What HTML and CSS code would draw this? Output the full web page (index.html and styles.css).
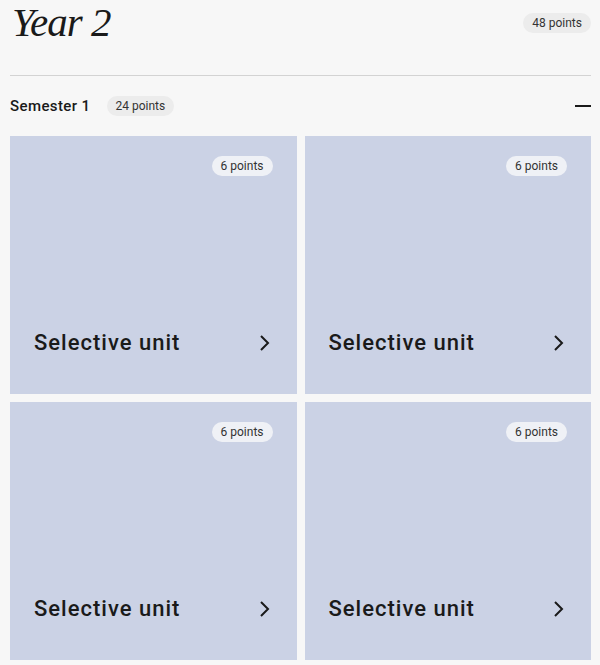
FILE: index.html
```html
<!DOCTYPE html>
<html lang="en">
<head>
  <meta charset="UTF-8" />
  <meta name="viewport" content="width=device-width, initial-scale=1.0"/>
  <title>Year 2</title>
  <link rel="stylesheet" href="styles.css">
</head>
<body>
  <section class="year">
    <header class="year-head">
      <h1>Year 2</h1>
      <span class="pill">48 points</span>
    </header>

    <div class="semester">
      <div class="semester-head">
        <h2>Semester 1</h2>
        <span class="pill">24 points</span>
        <span class="toggle"></span>
      </div>

      <div class="units">
        <a class="unit" href="#">
          <span class="pill pill-light">6 points</span>
          <span class="unit-name">Selective unit</span>
          <svg class="chevron" width="12" height="18" viewBox="0 0 12 18"><path d="M2 2l7 7-7 7" fill="none" stroke="#1a1a1a" stroke-width="2"/></svg>
        </a>
        <a class="unit" href="#">
          <span class="pill pill-light">6 points</span>
          <span class="unit-name">Selective unit</span>
          <svg class="chevron" width="12" height="18" viewBox="0 0 12 18"><path d="M2 2l7 7-7 7" fill="none" stroke="#1a1a1a" stroke-width="2"/></svg>
        </a>
        <a class="unit" href="#">
          <span class="pill pill-light">6 points</span>
          <span class="unit-name">Selective unit</span>
          <svg class="chevron" width="12" height="18" viewBox="0 0 12 18"><path d="M2 2l7 7-7 7" fill="none" stroke="#1a1a1a" stroke-width="2"/></svg>
        </a>
        <a class="unit" href="#">
          <span class="pill pill-light">6 points</span>
          <span class="unit-name">Selective unit</span>
          <svg class="chevron" width="12" height="18" viewBox="0 0 12 18"><path d="M2 2l7 7-7 7" fill="none" stroke="#1a1a1a" stroke-width="2"/></svg>
        </a>
      </div>
    </div>
  </section>
</body>
</html>
```

FILE: styles.css
```css
body {
  margin: 0;
  background: #f7f7f7;
  color: #1a1a1a;
  font-family: 'Roboto', Arial, sans-serif;
}

.year {
  padding: 0 9px 0 10px;
}

.year-head {
  display: flex;
  align-items: flex-start;
  justify-content: space-between;
  height: 75px;
  border-bottom: 1px solid #d3d3d3;
}

.year-head h1 {
  margin: 0;
  padding: 0 0 0 2px;
  font-family: 'Liberation Serif', serif;
  font-style: italic;
  font-weight: normal;
  font-size: 41px;
  line-height: 44px;
  letter-spacing: -1px;
}

.year-head .pill {
  margin-top: 13px;
}

.pill {
  display: inline-block;
  background: #ececec;
  color: #333;
  font-size: 12px;
  line-height: 20px;
  padding: 0 9px;
  border-radius: 10px;
}

.semester-head {
  display: flex;
  align-items: center;
  height: 60px;
}

.semester-head h2 {
  margin: 0 16px 0 0;
  font-size: 15px;
  font-weight: 500;
  letter-spacing: 0.4px;
}

.toggle {
  margin-left: auto;
  width: 16px;
  height: 2px;
  background: #1a1a1a;
}

.units {
  display: grid;
  grid-template-columns: 1fr 1fr;
  gap: 8px;
}

.unit {
  position: relative;
  height: 258px;
  background: #cbd2e5;
  color: #1a1a1a;
  text-decoration: none;
  display: flex;
  align-items: center;
  padding: 0 26px 0 24px;
}

.unit .pill-light {
  position: absolute;
  top: 20px;
  right: 24px;
  background: #eff1f6;
}

.unit-name {
  margin-top: 155px;
  font-size: 22px;
  font-weight: 500;
  letter-spacing: 1px;
  flex: 1;
}

.chevron {
  margin-top: 155px;
}
```
